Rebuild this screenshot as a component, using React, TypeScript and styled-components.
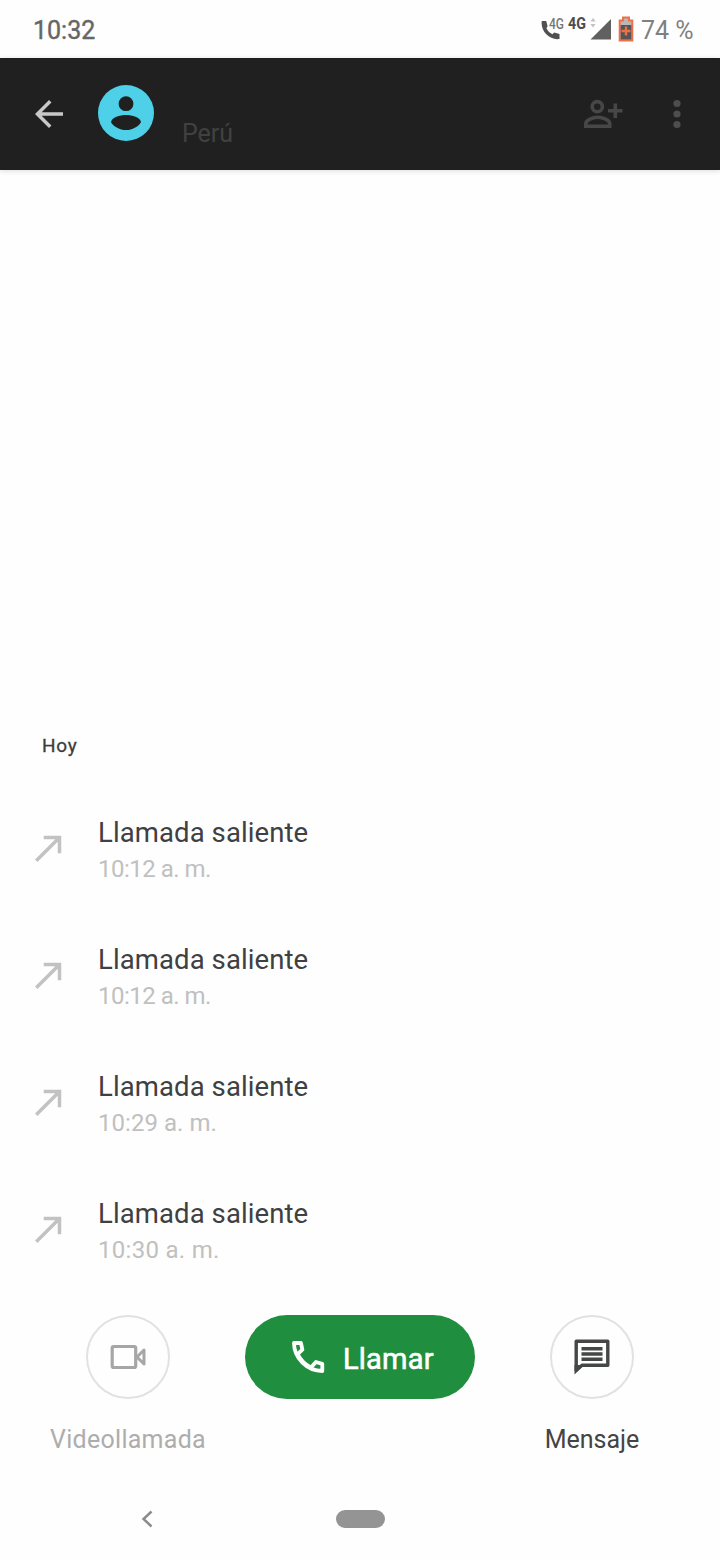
import React from 'react';
import styled, { createGlobalStyle } from 'styled-components';

const GlobalStyle = createGlobalStyle`
  * { box-sizing: border-box; }
  body { margin: 0; background: #fefefe; }
`;

const Screen = styled.div`
  display: flex;
  flex-direction: column;
  width: 720px;
  height: 1560px;
  overflow: hidden;
  background: #fefefe;
  font-family: Roboto, "Liberation Sans", sans-serif;
`;

const StatusBar = styled.div`
  display: flex;
  align-items: center;
  flex: none;
  height: 58px;
  padding: 3px 26px 0 33px;
`;

const Clock = styled.span`
  font-size: 25px;
  line-height: 30px;
  color: #666;
  -webkit-text-stroke: 0.4px #666;
  margin-right: auto;
`;

const StatusIcon = styled.svg<{ $left?: number; $lift?: number }>`
  display: block;
  flex: none;
  margin-left: ${(p) => p.$left ?? 0}px;
  margin-bottom: ${(p) => p.$lift ?? 0}px;
`;

const NetworkLabel = styled.span<{ $bold?: boolean; $left: number }>`
  font-size: ${(p) => (p.$bold ? 17 : 15)}px;
  line-height: 18px;
  font-weight: ${(p) => (p.$bold ? 700 : 500)};
  color: ${(p) => (p.$bold ? '#4c4c4c' : '#777')};
  width: ${(p) => (p.$bold ? 18 : 15)}px;
  margin: 0 0 ${(p) => (p.$bold ? 16 : 14)}px ${(p) => p.$left}px;
  transform: scaleX(${(p) => (p.$bold ? 0.84 : 0.8)});
  transform-origin: left;
`;

const BatteryLevel = styled.span`
  font-size: 25px;
  line-height: 30px;
  color: #808080;
  margin-left: 7px;
  width: 53px;
  white-space: nowrap;
`;

const Header = styled.header`
  display: flex;
  align-items: center;
  flex: none;
  height: 112px;
  padding: 0 22px 0 28px;
  background: #202020;
  box-shadow: 0 1px 5px rgba(0, 0, 0, 0.14);
`;

const Icon = styled.svg`
  display: block;
  flex: none;
`;

const Avatar = styled(Icon)`
  margin: 0 28px 2px 28px;
`;

const Country = styled.span`
  align-self: flex-end;
  flex: 1;
  font-size: 25px;
  line-height: 30px;
  color: #414141;
  margin-bottom: 21px;
`;

const HeaderActions = styled.div`
  display: flex;
  align-items: center;
  gap: 33px;
`;

const History = styled.main`
  flex: 1;
  display: flex;
  flex-direction: column;
  justify-content: flex-end;
  padding-bottom: 20px;
`;

const DayHeading = styled.h2`
  margin: 0 0 29px 42px;
  font-size: 19px;
  line-height: 24px;
  font-weight: 400;
  letter-spacing: 0.7px;
  color: #3c3c3c;
  -webkit-text-stroke: 0.3px #3c3c3c;
`;

const CallRow = styled.div`
  display: flex;
  align-items: center;
  height: 127px;
  padding: 0 28px;
  gap: 28px;
`;

const CallIcon = styled(Icon)`
  margin-bottom: 5px;
`;

const CallText = styled.div`
  display: flex;
  flex-direction: column;
  gap: 2px;
  margin-bottom: 1px;
`;

const CallTitle = styled.span`
  font-size: 27.5px;
  line-height: 36px;
  color: #3f4042;
  letter-spacing: 0.1px;
`;

const CallTime = styled.span<{ $spacing: number }>`
  font-size: 24px;
  line-height: 32px;
  color: #c0c0c0;
  letter-spacing: ${(p) => p.$spacing}px;
`;

const Actions = styled.div`
  display: grid;
  grid-template-columns: 256px 208px 256px;
  justify-items: center;
  flex: none;
  height: 162px;
`;

const Action = styled.div<{ $color: string }>`
  display: flex;
  flex-direction: column;
  align-items: center;
  gap: 25px;
  font-size: 25px;
  line-height: 32px;
  color: ${(p) => p.$color};
`;

const RoundButton = styled.button`
  display: flex;
  align-items: center;
  justify-content: center;
  width: 84px;
  height: 84px;
  padding: 0;
  border: 2px solid #e2e2e2;
  border-radius: 50%;
  background: transparent;
`;

const CallButton = styled.button`
  display: flex;
  align-items: center;
  width: 230px;
  height: 84px;
  padding: 0 0 0 45px;
  gap: 17px;
  border: 0;
  border-radius: 42px;
  background: #1f8e3e;
  color: #fff;
  font: 400 29px/36px Roboto, sans-serif;
`;

const CallLabel = styled.span`
  padding-top: 4px;
  letter-spacing: 0.2px;
  -webkit-text-stroke: 0.6px #fff;
`;

const ActionLabel = styled.span<{ $spacing: number }>`
  letter-spacing: ${(p) => p.$spacing}px;
`;

const NavBar = styled.nav`
  display: flex;
  align-items: center;
  flex: none;
  height: 83px;
  padding-left: 141px;
`;

const HomePill = styled.div`
  width: 49px;
  height: 18px;
  border-radius: 9px;
  background: #949494;
  margin-left: 183px;
`;

const calls = [
  { time: '10:12 a. m.', spacing: -0.5 },
  { time: '10:12 a. m.', spacing: -0.5 },
  { time: '10:29 a. m.', spacing: 0.05 },
  { time: '10:30 a. m.', spacing: 0.3 },
];

export default function App() {
  return (
    <Screen>
      <GlobalStyle />
      <StatusBar>
        <Clock>10:32</Clock>
        <StatusIcon width="19" height="19" viewBox="0 0 19 19">
          <path fill="#505050" d="M.8 0h4.400l1.400 5.200-1.200 2c1.200 2.600 3.200 4.600 6 6l1.800-1.700 5.300 1.500V18C8.500 19.500-.8 10 .8 0Z" />
        </StatusIcon>
        <NetworkLabel $left={-11}>4G</NetworkLabel>
        <NetworkLabel $bold $left={4}>4G</NetworkLabel>
        <StatusIcon $left={4} $lift={4} width="22" height="24" viewBox="0 0 22 24">
          <path fill="#c2c2c2" d="M3 1l2.600 3.500H.4zM3 10.500L.4 7h5.200z" />
          <path fill="#606060" d="M.5 22.500L21 2v20.500z" />
        </StatusIcon>
        <StatusIcon $left={6} $lift={4} width="16" height="26" viewBox="0 0 16 26">
          <path fill="#b8b8b8" stroke="#ed7048" strokeWidth="2" d="M5 1.500h6v3h3.300v20H1.700v-20H5z" />
          <path fill="#555" d="M2.700 9h10.600v14.500H2.700z" />
          <path fill="#ed7048" d="M6.800 10.500h2.400v3.300h3.300v2.400H9.200v3.300H6.800v-3.300H3.500v-2.400h3.300z" />
        </StatusIcon>
        <BatteryLevel>74 %</BatteryLevel>
      </StatusBar>

      <Header>
        <Icon width="42" height="42" viewBox="0 0 24 24">
          <path fill="#c8c8c8" d="M20 11H7.830l5.590-5.590L12 4l-8 8 8 8 1.410-1.410L7.830 13H20v-2z" />
        </Icon>
        <Avatar width="56" height="56" viewBox="0 0 56 56">
          <circle cx="28" cy="28" r="28" fill="#4dd0e8" />
          <circle cx="28" cy="18.700" r="7.400" fill="#202020" />
          <path fill="#202020" d="M13 37.200C13.500 32 22 30 28 30s14.500 2 15 7.200C40 41.800 34.500 45 28 45s-12-3.200-15-7.800Z" />
        </Avatar>
        <Country>Perú</Country>
        <HeaderActions>
          <Icon width="42" height="42" viewBox="0 0 42 42" fill="none" stroke="#474747" strokeWidth="3.600">
            <circle cx="16.300" cy="13.700" r="5.100" />
            <path d="M4.800 33.200v-2.400c0-4 7.200-6.500 12-6.500s12 2.500 12 6.500v2.400zM34.300 10.500v14.500M27 17.700h14.500" />
          </Icon>
          <Icon width="42" height="42" viewBox="0 0 42 42" fill="#4e4e4e">
            <circle cx="21" cy="10.500" r="3.600" />
            <circle cx="21" cy="21" r="3.600" />
            <circle cx="21" cy="31.500" r="3.600" />
          </Icon>
        </HeaderActions>
      </Header>

      <History>
        <DayHeading>Hoy</DayHeading>
        {calls.map((call, i) => (
          <CallRow key={i}>
            <CallIcon width="42" height="42" viewBox="0 0 24 24">
              <path fill="#c2c2c2" d="M9 5v2h6.590L4 18.590 5.410 20 17 8.410V15h2V5z" />
            </CallIcon>
            <CallText>
              <CallTitle>Llamada saliente</CallTitle>
              <CallTime $spacing={call.spacing}>{call.time}</CallTime>
            </CallText>
          </CallRow>
        ))}
      </History>

      <Actions>
        <Action $color="#adadad">
          <RoundButton aria-label="Videollamada">
            <Icon width="36" height="26" viewBox="0 0 36 26" fill="none" stroke="#a6a6a6" strokeWidth="3.200" strokeLinejoin="round">
              <rect x="2.200" y="2.500" width="23.500" height="21" rx="1.500" />
              <path d="M27 13l7-7v14z" strokeWidth="3" />
            </Icon>
          </RoundButton>
          <ActionLabel $spacing={0.28}>Videollamada</ActionLabel>
        </Action>
        <CallButton>
          <Icon width="36" height="36" viewBox="0 0 36 36" fill="none" stroke="#fff" strokeWidth="3.800" strokeLinejoin="round">
            <path d="M4 4H10.900L12.400 10.600L7.600 15.200C10.500 21 15 25.600 21 28.600L25.900 23L32.300 24.800V32C17 32 4 19 4 4Z" />
          </Icon>
          <CallLabel>Llamar</CallLabel>
        </CallButton>
        <Action $color="#444">
          <RoundButton aria-label="Mensaje">
            <Icon width="36" height="36" viewBox="0 0 36 36">
              <path fill="none" stroke="#444746" strokeWidth="3.400" strokeLinejoin="round" d="M2.200 2.200h31.600v24H8l-5.800 5z" />
              <path fill="#444746" d="M.5 26v9.500L10 26zM7.500 8H28.500v3.500H7.500zM7.500 13.200H28.500v3.500H7.500zM7.500 18.400H28.500v3.500H7.500z" />
            </Icon>
          </RoundButton>
          <ActionLabel $spacing={0}>Mensaje</ActionLabel>
        </Action>
      </Actions>

      <NavBar>
        <Icon width="12" height="18" viewBox="0 0 12 18" fill="none" stroke="#8a8a8a" strokeWidth="2.400">
          <path d="M10.500 1.500L2.500 9l8 7.500" />
        </Icon>
        <HomePill />
      </NavBar>
    </Screen>
  );
}
